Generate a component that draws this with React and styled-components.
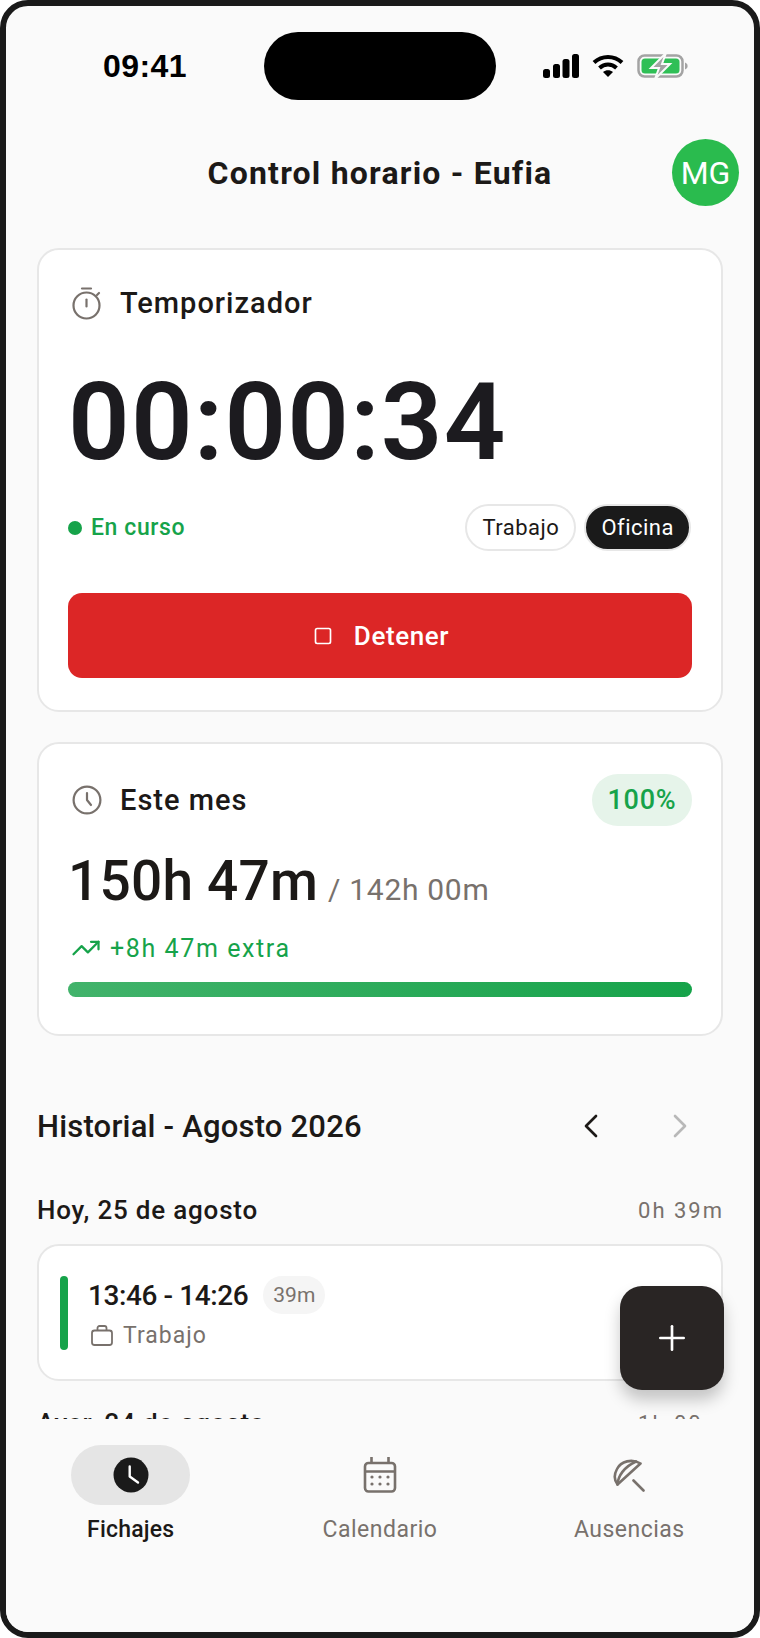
import React from "react";
import styled, { createGlobalStyle } from "styled-components";
import { ChevronLeft, ChevronRight, Plus, Square, TrendingUp } from "lucide-react";

const GlobalStyle = createGlobalStyle`
  html, body { margin: 0; padding: 0; background: #fff; }
  * { box-sizing: border-box; }
`;

const Phone = styled.div`
  position: relative;
  width: 760px;
  height: 1638px;
  display: flex;
  flex-direction: column;
  overflow: hidden;
  background: #fafafa;
  border: 6px solid #1a1a1a;
  border-radius: 28px;
  font-family: Roboto, "Liberation Sans", sans-serif;
  color: #1c1917;
`;

const StatusBar = styled.div`
  display: grid;
  grid-template-columns: 161px 232px 1fr;
  align-items: center;
  height: 68px;
  margin-top: 26px;
  padding: 0 66px 0 97px;
`;

const Time = styled.div`
  font-family: "Liberation Sans", sans-serif;
  font-size: 32px;
  font-weight: 700;
  letter-spacing: 0.4px;
  color: #000;
`;

const Island = styled.div`
  height: 68px;
  background: #000;
  border-radius: 34px;
`;

const StatusIcons = styled.div`
  display: flex;
  justify-content: flex-end;
  align-items: center;
  gap: 13px;
`;

const Header = styled.div`
  position: relative;
  display: flex;
  justify-content: center;
  align-items: center;
  height: 68px;
  margin-top: 39px;
`;

const Title = styled.h1`
  margin: 0;
  font-size: 32px;
  font-weight: 700;
  letter-spacing: 1.2px;
`;

const Avatar = styled.div`
  position: absolute;
  right: 15px;
  top: 0;
  width: 67px;
  height: 67px;
  display: flex;
  align-items: center;
  justify-content: center;
  border-radius: 50%;
  background: #2abb4e;
  color: #fff;
  font-size: 32px;
`;

const Content = styled.div`
  flex: 1;
  min-height: 0;
  overflow: hidden;
  padding: 41px 31px 0;
`;

const Card = styled.section`
  background: #fff;
  border: 2px solid #e7e7e7;
  border-radius: 22px;
  padding: ${(p) => p.$pad || "29px"};
  margin-bottom: ${(p) => p.$mb || "30px"};
`;

const CardHead = styled.div`
  display: flex;
  align-items: center;
  justify-content: space-between;
`;

const CardTitle = styled.div`
  display: flex;
  align-items: center;
  gap: 18px;
  padding-left: 4px;
  font-size: 29px;
  font-weight: 500;
  letter-spacing: 1px;
  svg { color: #78716c; }
`;

const TimerValue = styled.div`
  margin-top: 39px;
  font-size: 108px;
  line-height: 126px;
  font-weight: 600;
  letter-spacing: 1.2px;
  color: #1c1b1f;
`;

const StatusRow = styled.div`
  display: flex;
  align-items: center;
  justify-content: space-between;
  margin-top: 19px;
  padding-right: 1px;
`;

const Running = styled.div`
  display: flex;
  align-items: center;
  gap: 9px;
  font-size: 23px;
  font-weight: 500;
  letter-spacing: 0.6px;
  color: #16a34a;
`;

const Dot = styled.span`
  width: 14px;
  height: 14px;
  border-radius: 50%;
  background: #16a34a;
`;

const Chips = styled.div`
  display: flex;
  gap: 8px;
  align-items: center;
`;

const Chip = styled.span`
  height: 47px;
  display: flex;
  align-items: center;
  padding: 0 15px;
  border-radius: 24px;
  border: 2px solid #e7e7e7;
  background: ${(p) => (p.$dark ? "#1a1a1a" : "#fff")};
  color: ${(p) => (p.$dark ? "#fff" : "#1c1917")};
  font-size: 22px;
  letter-spacing: 0.5px;
`;

const StopButton = styled.button`
  width: 100%;
  height: 85px;
  margin-top: 42px;
  padding-left: 8px;
  display: flex;
  align-items: center;
  justify-content: center;
  gap: 21px;
  border: 0;
  border-radius: 14px;
  background: #dc2626;
  color: #fff;
  font-family: inherit;
  font-size: 26px;
  font-weight: 500;
  letter-spacing: 0.6px;
`;

const Badge = styled.div`
  width: 100px;
  height: 52px;
  display: flex;
  align-items: center;
  justify-content: center;
  border-radius: 26px;
  background: #e6f4ea;
  color: #16a34a;
  font-size: 27px;
  font-weight: 500;
  letter-spacing: 0.8px;
`;

const Hours = styled.div`
  display: flex;
  align-items: baseline;
  gap: 10px;
  margin-top: 23px;
  font-size: 55px;
  line-height: 64px;
  font-weight: 500;
  letter-spacing: 0.2px;
`;

const HoursGoal = styled.span`
  font-size: 30px;
  font-weight: 400;
  letter-spacing: 0.7px;
  color: #78716c;
`;

const Extra = styled.div`
  display: flex;
  align-items: center;
  gap: 9px;
  margin-top: 11px;
  padding-left: 3px;
  font-size: 25px;
  letter-spacing: 1.6px;
  color: #16a34a;
`;

const Progress = styled.div`
  height: 15px;
  margin-top: 19px;
  border-radius: 8px;
  background: linear-gradient(90deg, #42b36b, #16a34a);
`;

const HistoryHead = styled.div`
  display: flex;
  align-items: center;
  justify-content: space-between;
  margin-top: 70px;
  height: 40px;
`;

const HistoryTitle = styled.h2`
  margin: 0;
  font-size: 31px;
  font-weight: 500;
  letter-spacing: 0.2px;
`;

const MonthNav = styled.div`
  display: flex;
  align-items: center;
  gap: 49px;
  padding-right: 23px;
`;

const DayHead = styled.div`
  display: flex;
  align-items: center;
  justify-content: space-between;
  height: 32px;
  margin-top: ${(p) => p.$mt};
  margin-bottom: 18px;
`;

const DayTitle = styled.div`
  font-size: 26px;
  font-weight: 500;
  letter-spacing: 0.8px;
`;

const DayTotal = styled.div`
  margin-right: -1px;
  font-size: 22px;
  letter-spacing: 2px;
  color: #78716c;
`;

const Entry = styled.div`
  display: flex;
  align-items: center;
  gap: 20px;
  height: 137px;
  padding: 0 21px;
  background: #fff;
  border: 2px solid #e7e7e7;
  border-radius: 22px;
`;

const EntryBar = styled.div`
  width: 8px;
  height: 74px;
  border-radius: 4px;
  background: #16a34a;
`;

const EntryBody = styled.div`
  display: flex;
  flex-direction: column;
  gap: 8px;
`;

const EntryRange = styled.div`
  display: flex;
  align-items: center;
  gap: 15px;
  font-size: 28px;
  font-weight: 500;
  letter-spacing: -0.4px;
`;

const DurationPill = styled.span`
  width: 62px;
  height: 38px;
  display: flex;
  align-items: center;
  justify-content: center;
  border-radius: 19px;
  background: #f5f5f5;
  color: #78716c;
  font-size: 21px;
  font-weight: 400;
  letter-spacing: 0;
`;

const EntryKind = styled.div`
  display: flex;
  align-items: center;
  gap: 9px;
  padding-left: 2px;
  font-size: 23px;
  letter-spacing: 1px;
  color: #78716c;
`;

const Fab = styled.button`
  position: absolute;
  right: 30px;
  bottom: 242px;
  width: 104px;
  height: 104px;
  display: flex;
  align-items: center;
  justify-content: center;
  border: 0;
  border-radius: 22px;
  background: #292524;
  color: #fff;
  box-shadow: 0 10px 16px rgba(0, 0, 0, 0.22);
`;

const BottomNav = styled.nav`
  display: grid;
  grid-template-columns: repeat(3, 1fr);
  height: 213px;
  padding-top: 26px;
  background: #fafafa;
`;

const NavItem = styled.div`
  display: flex;
  flex-direction: column;
  align-items: center;
  gap: 11px;
  font-size: 23px;
  font-weight: ${(p) => (p.$active ? 500 : 400)};
  letter-spacing: ${(p) => (p.$active ? "0.2px" : "0.5px")};
  color: ${(p) => (p.$active ? "#1c1917" : "#78716c")};
`;

const NavIcon = styled.div`
  width: 119px;
  height: 60px;
  display: flex;
  align-items: center;
  justify-content: center;
  border-radius: 30px;
  background: ${(p) => (p.$active ? "#e5e5e5" : "transparent")};
`;

const SignalIcon = () => (
  <svg width="36" height="24" viewBox="0 0 36 24" fill="#000">
    <rect x="0" y="15" width="7" height="9" rx="2.5" />
    <rect x="10" y="10" width="7" height="14" rx="2.5" />
    <rect x="19.5" y="5" width="7" height="19" rx="2.5" />
    <rect x="29" y="0" width="7" height="24" rx="2.5" />
  </svg>
);

const WifiIcon = () => (
  <svg width="32" height="24" viewBox="0 0 32 24" fill="none" stroke="#000" strokeWidth="4">
    <path d="M2 8.5C10 1 22 1 30 8.5" />
    <path d="M7.5 14c5-4.6 12-4.6 17 0" />
    <path d="M16 23l-5-5c3-2.4 7-2.4 10 0z" fill="#000" stroke="none" />
  </svg>
);

const BatteryIcon = () => (
  <svg width="51" height="26" viewBox="0 0 51 26">
    <rect x="1.5" y="2.5" width="44" height="21" rx="6" fill="none" stroke="#a3a3a3" strokeWidth="2.5" />
    <rect x="4.5" y="5.5" width="38" height="15" rx="3.5" fill="#2fbf56" />
    <path d="M48 9.5c2 .8 2.6 2 2.6 3.5s-.6 2.7-2.6 3.5z" fill="#a3a3a3" />
    <path d="M29 0L14 15h8l-4 11 15-15h-8z" fill="#a3a3a3" stroke="#fafafa" strokeWidth="2" />
  </svg>
);

const StopwatchIcon = () => (
  <svg width="30" height="33" viewBox="0 0 30 33" fill="none" stroke="currentColor" strokeWidth="2.2" strokeLinecap="round">
    <path d="M10 1.5h9" />
    <circle cx="14.5" cy="18.5" r="13" />
    <path d="M14.5 12.5v7" />
    <path d="M25 8l2-2" />
  </svg>
);

const MonthClockIcon = () => (
  <svg width="30" height="30" viewBox="0 0 30 30" fill="none" stroke="currentColor" strokeWidth="2.2" strokeLinecap="round" strokeLinejoin="round">
    <circle cx="15" cy="15" r="13.4" />
    <path d="M15 8v7l4 5" />
  </svg>
);

const BagIcon = () => (
  <svg width="24" height="21" viewBox="0 0 24 21" fill="none" stroke="currentColor" strokeWidth="1.8" strokeLinejoin="round">
    <rect x="2" y="5.5" width="20" height="14.5" rx="2.5" />
    <path d="M7.5 5.5V3a2 2 0 0 1 2-2h5a2 2 0 0 1 2 2v2.5" />
  </svg>
);

const FilledClock = () => (
  <svg width="36" height="36" viewBox="0 0 36 36">
    <circle cx="18" cy="18" r="17.5" fill="#1a1a1a" />
    <path d="M16.7 9.5v10L25 25.500" fill="none" stroke="#fff" strokeWidth="2.4" strokeLinecap="round" strokeLinejoin="round" />
  </svg>
);

const CalendarIcon = () => (
  <svg width="34" height="36" viewBox="0 0 34 36" fill="none" stroke="#78716c" strokeWidth="2.6">
    <rect x="2" y="6" width="30" height="28.5" rx="3.5" />
    <path d="M2 14.5h30M8.5 0v6M25.5 0v6" />
    <g fill="#78716c" stroke="none">
      <circle cx="9" cy="20" r="1.6" />
      <circle cx="17" cy="20" r="1.6" />
      <circle cx="25" cy="20" r="1.6" />
      <circle cx="9" cy="27" r="1.6" />
      <circle cx="17" cy="27" r="1.6" />
      <circle cx="25" cy="27" r="1.6" />
    </g>
  </svg>
);

const UmbrellaIcon = () => (
  <svg width="34" height="33" viewBox="7 8 34 33" fill="none" stroke="#78716c" strokeWidth="2.6" strokeLinecap="round" strokeLinejoin="round">
    <path d="M35.5 12.5C27 7.5 16 10 12 18c-3 5.5-3 11 .5 15.5z" />
    <path d="M12.5 33.5C13 25 19 16 31 10.5" />
    <path d="M28.5 29.5L38.5 39.5" />
  </svg>
);

const App = () => (
  <>
    <GlobalStyle />
    <Phone>
      <StatusBar>
        <Time>09:41</Time>
        <Island />
        <StatusIcons>
          <SignalIcon />
          <WifiIcon />
          <BatteryIcon />
        </StatusIcons>
      </StatusBar>

      <Header>
        <Title>Control horario - Eufia</Title>
        <Avatar>MG</Avatar>
      </Header>

      <Content>
        <Card $pad="36px 29px 32px">
          <CardTitle>
            <StopwatchIcon />
            Temporizador
          </CardTitle>
          <TimerValue>00:00:34</TimerValue>
          <StatusRow>
            <Running>
              <Dot />
              En curso
            </Running>
            <Chips>
              <Chip>Trabajo</Chip>
              <Chip $dark>Oficina</Chip>
            </Chips>
          </StatusRow>
          <StopButton>
            <Square size={20} strokeWidth={2} />
            Detener
          </StopButton>
        </Card>

        <Card $pad="30px 29px 37px" $mb="0">
          <CardHead>
            <CardTitle>
              <MonthClockIcon />
              Este mes
            </CardTitle>
            <Badge>100%</Badge>
          </CardHead>
          <Hours>
            150h 47m
            <HoursGoal>/ 142h 00m</HoursGoal>
          </Hours>
          <Extra>
            <TrendingUp size={30} strokeWidth={1.8} />
            +8h 47m extra
          </Extra>
          <Progress />
        </Card>

        <HistoryHead>
          <HistoryTitle>Historial - Agosto 2026</HistoryTitle>
          <MonthNav>
            <ChevronLeft size={40} color="#1c1917" strokeWidth={1.6} />
            <ChevronRight size={40} color="#b8b8b8" strokeWidth={1.6} />
          </MonthNav>
        </HistoryHead>

        <DayHead $mt="48px">
          <DayTitle>Hoy, 25 de agosto</DayTitle>
          <DayTotal>0h 39m</DayTotal>
        </DayHead>
        <Entry>
          <EntryBar />
          <EntryBody>
            <EntryRange>
              13:46 - 14:26
              <DurationPill>39m</DurationPill>
            </EntryRange>
            <EntryKind>
              <BagIcon />
              Trabajo
            </EntryKind>
          </EntryBody>
        </Entry>

        <DayHead $mt="26px">
          <DayTitle>Ayer, 24 de agosto</DayTitle>
          <DayTotal>1h 00m</DayTotal>
        </DayHead>
      </Content>

      <BottomNav>
        <NavItem $active>
          <NavIcon $active>
            <FilledClock />
          </NavIcon>
          Fichajes
        </NavItem>
        <NavItem>
          <NavIcon>
            <CalendarIcon />
          </NavIcon>
          Calendario
        </NavItem>
        <NavItem>
          <NavIcon>
            <UmbrellaIcon />
          </NavIcon>
          Ausencias
        </NavItem>
      </BottomNav>

      <Fab>
        <Plus size={40} strokeWidth={1.6} />
      </Fab>
    </Phone>
  </>
);

export default App;
